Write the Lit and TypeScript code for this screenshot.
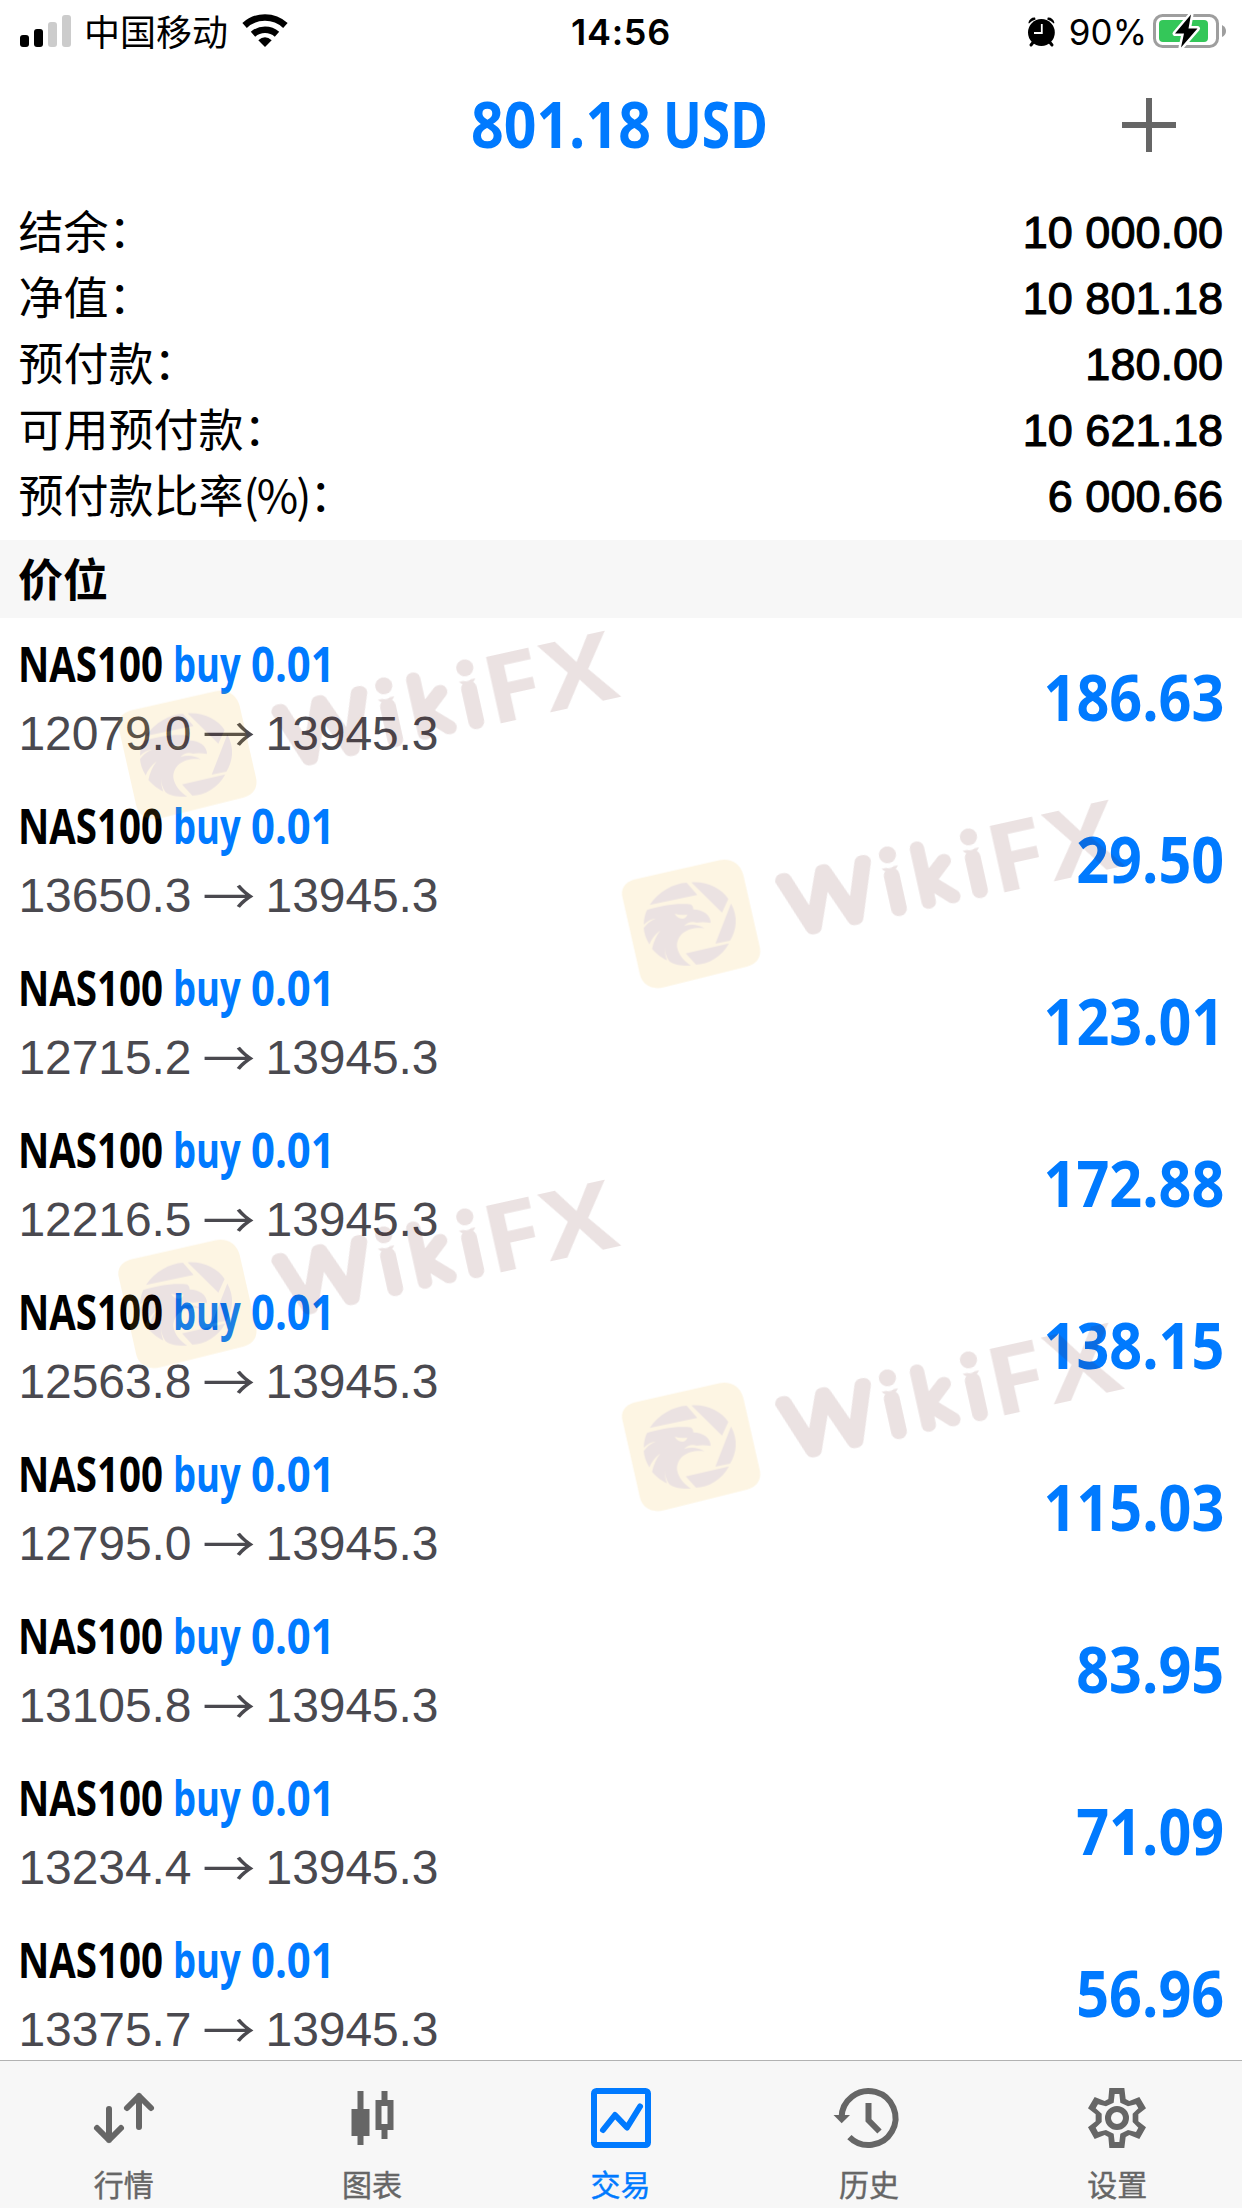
import { LitElement, html, css, svg } from "lit";
import { customElement, property } from "lit/decorators.js";

interface Position {
  symbol: string;
  side: string;
  volume: string;
  open: string;
  current: string;
  profit: string;
}

const position = (open: string, profit: string): Position => ({
  symbol: "NAS100",
  side: "buy",
  volume: "0.01",
  open,
  current: "13945.3",
  profit,
});

const POSITIONS: Position[] = [
  position("12079.0", "186.63"),
  position("13650.3", "29.50"),
  position("12715.2", "123.01"),
  position("12216.5", "172.88"),
  position("12563.8", "138.15"),
  position("12795.0", "115.03"),
  position("13105.8", "83.95"),
  position("13234.4", "71.09"),
  position("13375.7", "56.96"),
];

const ACCOUNT: [string, string, string][] = [
  ["结余", "", "10 000.00"],
  ["净值", "", "10 801.18"],
  ["预付款", "", "180.00"],
  ["可用预付款", "", "10 621.18"],
  ["预付款比率", "(%)", "6 000.66"],
];

const TAB_ICONS = {
  quotes: svg`<g fill="none" stroke="currentColor" stroke-width="6" stroke-linecap="round" stroke-linejoin="round">
    <path d="M15 21V52M3 40L15 52L27 40"/><path d="M45 39V8M33 20L45 8L57 20"/></g>`,
  chart: svg`<path fill="currentColor" fill-rule="evenodd" d="M16 3h6v18h6v27h-6v9h-6v-9h-6V21h6zM40 3h6v9h6v30h-6v9h-6v-9h-6V12h6zM40 18v18h6V18z" transform="translate(-.5 0)"/>`,
  trade: svg`<g fill="none" stroke="currentColor" stroke-width="6">
    <rect x="3" y="3" width="54" height="54" rx="2.5"/>
    <path stroke-linecap="round" stroke-linejoin="round" d="M12 42L24 27L36 39.5L49 18.5"/></g>`,
  history: svg`<g transform="translate(-3 0)"><g fill="none" stroke="currentColor" stroke-width="6">
    <path d="M5.5 30A27 27 0 1 1 13.4 49.1"/><path d="M32.5 15V32.3L43.5 43.5"/></g>
    <path fill="currentColor" d="M-2.5 27H14L5.7 35.3z"/></g>`,
  settings: svg`<g transform="translate(-17 -13) scale(.33333)"><path fill="currentColor" fill-rule="evenodd"
    d="M118 39H163L167 72L178 78L208 66L228 100L205 118V139L228 157L208 192L178 180L167 186L163 219H118L115 186L104 180L74 192L54 157L77 139V118L54 100L74 66L104 78L115 72Z
       M134 57L131 83L108 94L84 88L77 100L95 116V141L77 158L84 171L108 165L131 176L134 201H148L151 176L174 165L198 171L205 158L188 141V116L205 100L198 88L174 94L151 83L148 57Z"/>
    <circle cx="141" cy="129" r="27" fill="none" stroke="currentColor" stroke-width="18"/></g>`,
};

@customElement("status-bar")
class StatusBar extends LitElement {
  static styles = css`
    :host { display: grid; grid-template-columns: 1fr auto 1fr; align-items: center; height: 60px; padding: 0 16px 0 20px; box-sizing: border-box; }
    .side { display: flex; align-items: center; height: 60px; }
    .right { justify-content: flex-end; }
    .carrier { font: 400 36px/56px "Noto Sans CJK SC", sans-serif; margin: 0 14px 2px 13px; }
    .time { font: 600 36px/60px Inter, sans-serif; letter-spacing: 0.7px; padding: 2px 4px 0 0; }
    .pct { font: 400 35px/60px Inter, sans-serif; margin: 2px 5px 0 14px; }
    svg { display: block; flex: none; }
  `;
  render() {
    return html`
      <div class="side">
        <svg width="51" height="60" viewBox="20 0 51 60">
          <rect x="20" y="34" width="9" height="12" rx="3"/><rect x="34" y="28" width="9" height="18" rx="3"/>
          <rect x="48" y="21" width="9" height="25" rx="3" fill="#ccc"/><rect x="62" y="14" width="9" height="32" rx="3" fill="#ccc"/>
        </svg>
        <span class="carrier">中国移动</span>
        <svg width="46" height="60" viewBox="243 0 46 60">
          <g fill="none" stroke="#000" stroke-width="6.6"><path d="M245.6 24.5A30 30 0 0 1 286.4 24.5"/><path d="M254 33.3A18 18 0 0 1 278 33.3"/></g>
          <path d="M259.3 39.2Q266 33.2 272.7 39.2L266 46z"/>
        </svg>
      </div>
      <div class="time">14:56</div>
      <div class="side right">
        <svg width="28" height="60" viewBox="1026 0 28 60">
          <path d="M1030 44L1034 39M1051 44L1047 39" stroke="#000" stroke-width="3" stroke-linecap="round"/>
          <circle cx="1040.4" cy="31.5" r="13.4"/>
          <path d="M1027.4 22A6 6 0 0 1 1034 16.6L1034.6 18.4A17 17 0 0 0 1028 22.4zM1053.4 22A6 6 0 0 0 1046.8 16.6L1046.2 18.4A17 17 0 0 1 1052.8 22.4z"/>
          <path d="M1040.8 23V32H1033" fill="none" stroke="#fff" stroke-width="1.8"/>
        </svg>
        <span class="pct">90%</span>
        <svg width="74" height="60" viewBox="1152 0 74 60">
          <rect x="1154.5" y="14.5" width="63" height="31" rx="8" fill="none" stroke="#9e9e9e" stroke-width="3"/>
          <path d="M1222 24Q1226 26 1226 30T1222 36z" fill="#9e9e9e"/>
          <rect x="1159" y="19" width="49" height="22" rx="4" fill="#34c759"/>
          <path d="M1191 13.5L1175 32.5H1184L1181 46.5L1197.5 27.5H1188.5z" fill="#000" stroke="#fff" stroke-width="5" paint-order="stroke" stroke-linejoin="round"/>
        </svg>
      </div>`;
  }
}

@customElement("position-row")
class PositionRow extends LitElement {
  @property({ attribute: false }) item!: Position;
  static styles = css`
    :host { display: flex; justify-content: space-between; align-items: flex-start; height: 162px; padding: 0 18px; box-sizing: border-box; }
    .info { display: flex; flex-direction: column; }
    .title { display: flex; height: 85px; padding-top: 13px; box-sizing: border-box; font: 700 48px/66px "Open Sans", sans-serif; white-space: nowrap; }
    .word { display: block; transform-origin: 0 50%; }
    .name { width: 155px; }
    .name .word { width: 181px; transform: scaleX(0.802); }
    .deal { color: #007aff; }
    .side { width: 77.5px; }
    .side .word { width: 89px; transform: scaleX(0.76); }
    .volume { width: 84px; }
    .volume .word { width: 96px; transform: scaleX(0.872); }
    .prices { font: 400 48px/62px "Liberation Sans", sans-serif; letter-spacing: -0.1px; color: #4a494f; margin-left: 0.5px; display: flex; }
    .arrow { font: 400 48px/56px "Noto Sans CJK SC", sans-serif; margin: 0 13.2px; transform: scaleX(1.1); height: 56px; }
    .amount { font: 700 65px/90px "Open Sans", sans-serif; color: #007aff; padding-top: 33px; transform: scaleX(0.885); transform-origin: 100% 50%; }
  `;
  render() {
    const p = this.item;
    return html`
      <div class="info">
        <div class="title">
          <span class="name"><span class="word">${p.symbol}</span></span>
          <span class="deal side"><span class="word">${p.side}</span></span>
          <span class="deal volume"><span class="word">${p.volume}</span></span>
        </div>
        <div class="prices"><span>${p.open}</span><span class="arrow">→</span><span>${p.current}</span></div>
      </div>
      <div class="amount">${p.profit}</div>`;
  }
}

@customElement("brand-marks")
class BrandMarks extends LitElement {
  static styles = css`
    :host { display: block; }
    svg { display: block; }
    .soft { font: 100 77px Lato, sans-serif; stroke: #580d0d; stroke-width: 13.5px; stroke-linejoin: round; stroke-linecap: round; }
    .stem { font-size: 70px; stroke-width: 15px; text-anchor: middle; }
    .bold { font: 700 95px "Open Sans", sans-serif; }
  `;
  private mark(dx: number, dy: number) {
    return svg`<g opacity=".12" transform="translate(${dx} ${dy})">
      <g transform="scale(.33333)">
        <path fill="#eeac16" d="M80 87L325 31C362 23 392 41 400 75L449 290C456 320 440 343 410 350L160 412C125 420 98 405 90 375L37 140C31 112 50 93 80 87Z"/>
        <path fill="#580d0d" fill-rule="evenodd" d="M119 165C145 125 190 100 230 98L262 135ZM244 97C290 93 335 115 355 147L336 188ZM363 160C385 200 380 240 360 272L316 281ZM357 280C335 320 295 343 258 344L227 310Z
          M111 180C150 167 200 158 243 163Q250 168 250 178C278 178 303 195 302 219Q278 214 260 218Q240 210 222 228Q255 218 284 235C235 229 200 252 201 290C205 315 223 333 243 347C215 348 190 345 177 333Q163 312 165 290Q163 312 171 331C150 322 137 309 126 297Q132 265 151 241Q128 258 118 283C108 267 102 250 101 234Q115 214 138 205Q117 208 101 224C102 205 105 192 111 180ZM194 191Q213 197 232 193Q229 205 216 206Q201 204 194 191Z"/>
      </g>
      <g fill="#580d0d" transform="translate(393 42.7) rotate(-12.5)">
        <g class="soft">
          <text x="-215" y="-7" textLength="88" lengthAdjust="spacingAndGlyphs">W</text>
          <text x="-82" y="-7">k</text>
        </g>
        <g clip-path="url(#stems)"><g class="soft">
          <text class="stem" x="-105" y="-7">i</text>
          <text class="stem" x="-22" y="-7">i</text>
        </g></g>
        <circle cx="-104.6" cy="-62" r="8.6"/><circle cx="-21.6" cy="-62" r="8.6"/>
        <g class="bold">
          <text x="-8" y="0" textLength="58" lengthAdjust="spacingAndGlyphs">F</text>
          <text x="52" y="0" textLength="73" lengthAdjust="spacingAndGlyphs">X</text>
        </g>
      </g>
    </g>`;
  }
  render() {
    return html`<svg width="1242" height="2208" viewBox="0 0 1242 2208">
      <defs><clipPath id="stems"><rect x="-130" y="-49.5" width="130" height="60"/></clipPath></defs>
      ${this.mark(106.3, 681)}${this.mark(610, 850)}${this.mark(106.3, 1230)}${this.mark(610, 1373)}
    </svg>`;
  }
}

@customElement("tab-item")
class TabItem extends LitElement {
  @property() label = "";
  @property() icon: keyof typeof TAB_ICONS = "quotes";
  static styles = css`
    :host { flex: 1; display: flex; flex-direction: column; align-items: center; padding: 27px 1px 0 0; color: #666; }
    :host([active]) { color: #007aff; }
    svg { display: block; overflow: visible; }
    .label { font: 400 30px/44px "Noto Sans CJK SC", sans-serif; margin-top: 13px; -webkit-text-stroke: 0.4px currentColor; }
  `;
  render() {
    return html`<svg width="60" height="60" viewBox="0 0 60 60">${TAB_ICONS[this.icon]}</svg><span class="label">${this.label}</span>`;
  }
}

@customElement("app-root")
class AppRoot extends LitElement {
  static styles = css`
    :host { display: flex; flex-direction: column; position: relative; width: 1242px; height: 2208px; overflow: hidden; background: #fff; color: #000; font-family: "Liberation Sans", "Noto Sans CJK SC", sans-serif; }
    .head { display: grid; grid-template-columns: 1fr 300px 1fr; height: 138px; align-items: center; }
    .total { grid-column: 2; display: flex; font: 700 65px/90px "Open Sans", sans-serif; color: #007aff; white-space: nowrap; margin-top: -12px; }
    .word { display: block; transform-origin: 0 50%; }
    .sum { width: 192px; }
    .sum .word { width: 205px; transform: scaleX(0.88); }
    .currency { width: 106px; }
    .currency .word { width: 132px; transform: scaleX(0.79); }
    .add { justify-self: end; margin: -8px 66px 0 0; display: block; }
    .account { display: flex; flex-direction: column; height: 342px; flex: none; }
    .line { display: flex; justify-content: space-between; height: 66px; padding: 0 19px 0 18.5px; line-height: 66px; font-size: 45px; }
    .key { display: flex; font-family: "Noto Sans CJK SC", sans-serif; height: 64px; line-height: 64px; }
    .unit { letter-spacing: -2px; }
    .colon { line-height: 61px; }
    .val { padding-top: 2px; -webkit-text-stroke: 1.1px #000; }
    .section { flex: none; height: 78px; padding-left: 18px; background: #f7f7f7; font: 700 45px/76px "Noto Sans CJK SC", sans-serif; }
    .list { flex: 1; min-height: 0; display: flex; flex-direction: column; }
    position-row { flex: none; }
    .tabs { display: flex; flex: none; height: 148px; box-sizing: border-box; border-top: 1px solid #b2b2b2; background: #f7f7f7; }
    .marks { position: absolute; inset: 0; pointer-events: none; }
  `;
  render() {
    return html`
      <status-bar></status-bar>
      <header class="head">
        <div class="total"><span class="sum"><span class="word">801.18</span></span><span class="currency"><span class="word">USD</span></span></div>
        <svg class="add" width="54" height="54" viewBox="0 0 54 54"><path d="M0 27H54M27 0V54" stroke="#666" stroke-width="6"/></svg>
      </header>
      <section class="account">
        ${ACCOUNT.map(([key, unit, value]) => html`<div class="line">
          <span class="key"><span>${key}</span><span class="unit">${unit}</span><span class="colon">：</span></span><span class="val">${value}</span>
        </div>`)}
      </section>
      <div class="section">价位</div>
      <main class="list">${POSITIONS.map((p) => html`<position-row .item=${p}></position-row>`)}</main>
      <nav class="tabs">
        <tab-item icon="quotes" label="行情"></tab-item>
        <tab-item icon="chart" label="图表"></tab-item>
        <tab-item icon="trade" label="交易" active></tab-item>
        <tab-item icon="history" label="历史"></tab-item>
        <tab-item icon="settings" label="设置"></tab-item>
      </nav>
      <brand-marks class="marks"></brand-marks>`;
  }
}
